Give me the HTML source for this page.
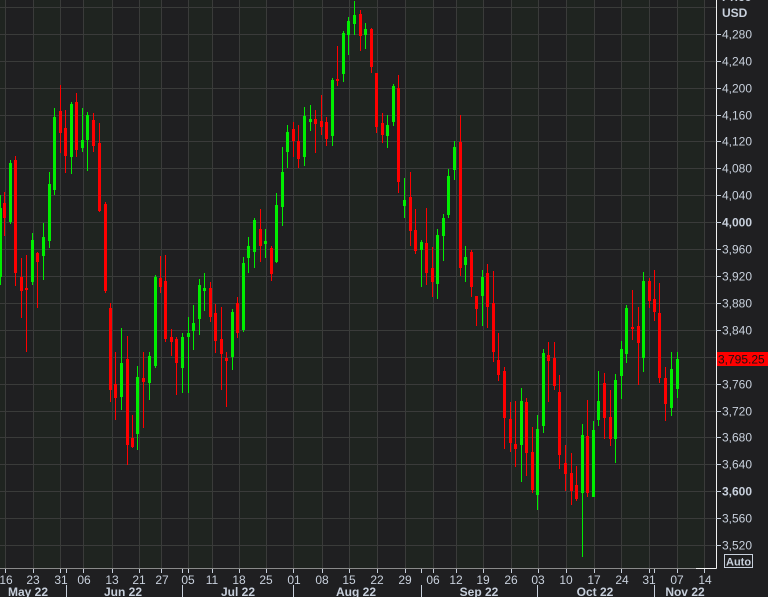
<!DOCTYPE html>
<html><head><meta charset="utf-8"><style>
html,body{margin:0;padding:0;background:#1f1f21;}
svg{display:block;font-family:"Liberation Sans","DejaVu Sans",sans-serif;}
</style></head><body>
<svg width="768" height="597" viewBox="0 0 768 597" xmlns="http://www.w3.org/2000/svg">
<rect width="768" height="597" fill="#1f1f21"/>
<g fill="#1f2420">
<rect x="0" y="0" width="5" height="568"/>
<rect x="33" y="0" width="27" height="568"/>
<rect x="83" y="0" width="29" height="568"/>
<rect x="139" y="0" width="22" height="568"/>
<rect x="188" y="0" width="24" height="568"/>
<rect x="239" y="0" width="27" height="568"/>
<rect x="293" y="0" width="29" height="568"/>
<rect x="349" y="0" width="28" height="568"/>
<rect x="405" y="0" width="28" height="568"/>
<rect x="456" y="0" width="27" height="568"/>
<rect x="511" y="0" width="27" height="568"/>
<rect x="566" y="0" width="28" height="568"/>
<rect x="621" y="0" width="28" height="568"/>
<rect x="677" y="0" width="27" height="568"/>
</g>
<path stroke="#3a3b3a" stroke-width="1" fill="none" d="M0 7.5H716M0 34.5H716M0 61.5H716M0 88.5H716M0 115.5H716M0 141.5H716M0 168.5H716M0 195.5H716M0 222.5H716M0 249.5H716M0 276.5H716M0 303.5H716M0 330.5H716M0 357.5H716M0 384.5H716M0 411.5H716M0 437.5H716M0 464.5H716M0 491.5H716M0 518.5H716M0 545.5H716
M5.5 0V568M33.5 0V568M60.5 0V568M83.5 0V568M112.5 0V568M139.5 0V568M161.5 0V568M188.5 0V568M212.5 0V568M239.5 0V568M266.5 0V568M293.5 0V568M322.5 0V568M349.5 0V568M377.5 0V568M405.5 0V568M433.5 0V568M456.5 0V568M483.5 0V568M511.5 0V568M538.5 0V568M566.5 0V568M594.5 0V568M621.5 0V568M649.5 0V568M677.5 0V568M704.5 0V568"/>
<path stroke="#00ee00" stroke-width="1" fill="none" d="M0.5 195V285M10.5 160V224M32.5 233V285M43.5 223V280M49.5 172V248M54.5 108V195M71.5 102V174M82.5 108V152M87.5 112V171M121.5 328V410M137.5 366V450M149.5 352V400M155.5 275V368M182.5 333V393M188.5 317V393M193.5 305V350M199.5 279V335M204.5 273V311M232.5 309V370M243.5 257V332M248.5 237V273M254.5 218V268M265.5 229V258M276.5 193V263M282.5 147V226M287.5 125V168M304.5 107V166M310.5 105V131M332.5 78V146M343.5 31V82M348.5 17V55M354.5 1V35M365.5 23V49M387.5 115V148M393.5 84V126M404.5 178V218M421.5 240V287M437.5 229V299M443.5 214V261M448.5 169V218M454.5 141V180M465.5 246V282M482.5 270V326M521.5 388V482M537.5 415V510M543.5 349V433M582.5 424V557M593.5 421V497M598.5 371V426M615.5 374V463M621.5 341V399M626.5 305V363M643.5 272V372M671.5 352V416M677.5 352V398"/>
<path stroke="#00ee00" stroke-width="3" fill="none" d="M0.5 208V277M10.5 163V222M32.5 240V282M43.5 237V256M49.5 184V241M54.5 117V190M71.5 104V157M82.5 140V148M87.5 115V140M121.5 363V397M137.5 377V434M149.5 356V383M155.5 277V366M182.5 337V368M188.5 333V337M193.5 323V331M199.5 285V319M204.5 288V291M232.5 312V357M243.5 263V330M248.5 246V258M254.5 220V252M265.5 241V244M276.5 205V262M282.5 172V207M287.5 132V152M304.5 116V157M310.5 119V122M332.5 80V136M343.5 33V74M348.5 21V35M354.5 15V24M365.5 29V35M387.5 125V136M393.5 86V122M404.5 200V206M421.5 242V250M437.5 235V284M443.5 218V236M448.5 176V215M454.5 147V170M465.5 257V265M482.5 277V296M521.5 401V445M537.5 429V495M543.5 353V426M582.5 435V493M593.5 430V497M598.5 401V420M615.5 380V439M621.5 349V376M626.5 308V354M643.5 281V358M671.5 369V408M677.5 359V389"/>
<path stroke="#ff0000" stroke-width="1" fill="none" d="M4.5 192V236M15.5 156V286M21.5 258V318M26.5 255V352M37.5 252V308M60.5 85V153M65.5 110V173M76.5 93V157M93.5 113V152M99.5 123V212M105.5 202V293M110.5 303V402M115.5 352V420M127.5 336V465M132.5 415V448M143.5 352V428M160.5 256V293M165.5 255V342M171.5 329V356M176.5 337V395M210.5 282V322M215.5 304V353M221.5 307V390M226.5 352V407M237.5 297V338M260.5 209V262M271.5 246V281M293.5 122V157M298.5 125V168M315.5 110V153M321.5 95V135M326.5 117V146M337.5 46V86M360.5 10V51M371.5 28V73M376.5 73V133M382.5 113V143M398.5 75V193M410.5 172V246M415.5 209V254M426.5 208V285M432.5 247V297M460.5 115V276M471.5 250V297M476.5 296V326M487.5 264V328M493.5 271V362M498.5 333V381M504.5 367V449M510.5 402V452M515.5 401V467M526.5 398V476M532.5 427V493M548.5 342V402M554.5 342V390M559.5 375V469M565.5 445V491M571.5 453V505M576.5 466V501M587.5 400V497M604.5 373V439M610.5 390V446M632.5 290V340M638.5 307V385M649.5 278V308M654.5 270V321M659.5 283V383M665.5 367V421"/>
<path stroke="#ff0000" stroke-width="3" fill="none" d="M4.5 203V218M15.5 160V273M21.5 277V291M26.5 288V290M37.5 253V262M60.5 111V133M65.5 128V156M76.5 102V150M93.5 120V146M99.5 143V211M105.5 204V291M110.5 308V390M115.5 384V398M127.5 359V445M132.5 438V447M143.5 378V382M160.5 278V287M165.5 281V339M171.5 337V342M176.5 339V363M210.5 288V317M215.5 313V341M221.5 339V354M226.5 358V361M237.5 303V333M260.5 229V246M271.5 248V274M293.5 129V141M298.5 141V159M315.5 119V124M321.5 121V127M326.5 122V139M337.5 79V81M360.5 14V36M371.5 29V67M376.5 73V127M382.5 123V135M398.5 88V182M410.5 197V231M415.5 230V251M426.5 243V273M432.5 268V282M460.5 142V268M471.5 252V287M476.5 296V309M487.5 273V307M493.5 303V352M498.5 360V375M504.5 371V418M510.5 419V443M515.5 444V449M526.5 402V453M532.5 452V490M548.5 355V361M554.5 358V386M559.5 392V455M565.5 463V474M571.5 473V491M576.5 485V499M587.5 436V493M604.5 383V418M610.5 417V439M632.5 327V329M638.5 326V343M649.5 281V301M654.5 299V312M659.5 313V378M665.5 378V404"/>
<path stroke="#f0f0f0" stroke-width="1" fill="none" d="M716.5 0V568.5M696 568.5H716.5"/>
<path stroke="#8a8a8a" stroke-width="1" fill="none" d="M0 568.5H696"/>
<path stroke="#c8d0dc" stroke-width="1" fill="none" d="M716 34.5H721M716 61.5H721M716 88.5H721M716 115.5H721M716 141.5H721M716 168.5H721M716 195.5H721M716 222.5H721M716 249.5H721M716 276.5H721M716 303.5H721M716 330.5H721M716 384.5H721M716 411.5H721M716 437.5H721M716 464.5H721M716 491.5H721M716 518.5H721M716 545.5H721
M5.5 569V573M33.5 569V573M60.5 569V573M66.5 569V573M83.5 569V573M112.5 569V573M139.5 569V573M161.5 569V573M182.5 569V573M188.5 569V573M212.5 569V573M239.5 569V573M266.5 569V573M293.5 569V573M322.5 569V573M349.5 569V573M377.5 569V573M405.5 569V573M421.5 569V573M433.5 569V573M456.5 569V573M483.5 569V573M511.5 569V573M538.5 569V573M566.5 569V573M594.5 569V573M621.5 569V573M649.5 569V573M654.5 569V573M677.5 569V573M704.5 569V573
M66.5 585V597M182.5 585V597M293.5 585V597M421.5 585V597M537.5 585V597M654.5 585V597"/>
<g fill="#c8d0dc" font-size="12">
<text x="722" y="1" font-weight="bold">Price</text>
<text x="722" y="17" font-weight="bold">USD</text>
<text x="722" y="38.5">4,280</text>
<text x="722" y="65.5">4,240</text>
<text x="722" y="92.5">4,200</text>
<text x="722" y="119.5">4,160</text>
<text x="722" y="145.5">4,120</text>
<text x="722" y="172.5">4,080</text>
<text x="722" y="199.5">4,040</text>
<text x="722" y="226.5" font-weight="bold">4,000</text>
<text x="722" y="253.5">3,960</text>
<text x="722" y="280.5">3,920</text>
<text x="722" y="307.5">3,880</text>
<text x="722" y="334.5">3,840</text>
<text x="722" y="388.5">3,760</text>
<text x="722" y="415.5">3,720</text>
<text x="722" y="441.5">3,680</text>
<text x="722" y="468.5">3,640</text>
<text x="722" y="495.5" font-weight="bold">3,600</text>
<text x="722" y="522.5">3,560</text>
<text x="722" y="549.5">3,520</text>
</g>
<rect x="717" y="352" width="51" height="14" fill="#ff0000"/>
<text x="718" y="363.5" font-size="12" fill="#1a1212">3,795.25</text>
<rect x="724.5" y="554.5" width="28" height="13" fill="none" stroke="#c8d0dc"/>
<text x="726" y="565.5" font-size="11" font-weight="bold" fill="#c8d0dc">Auto</text>
<g fill="#c8d0dc" font-size="12" text-anchor="middle">
<text x="6" y="584">16</text><text x="33" y="584">23</text><text x="61" y="584">31</text><text x="84" y="584">06</text>
<text x="112" y="584">13</text><text x="139" y="584">21</text><text x="162" y="584">27</text><text x="188" y="584">05</text>
<text x="212" y="584">11</text><text x="239" y="584">18</text><text x="266" y="584">25</text><text x="294" y="584">01</text>
<text x="322" y="584">08</text><text x="349" y="584">15</text><text x="377" y="584">22</text><text x="405" y="584">29</text>
<text x="433" y="584">06</text><text x="456" y="584">12</text><text x="483" y="584">19</text><text x="511" y="584">26</text>
<text x="538" y="584">03</text><text x="566" y="584">10</text><text x="594" y="584">17</text><text x="622" y="584">24</text>
<text x="649" y="584">31</text><text x="677" y="584">07</text><text x="705" y="584">14</text>
</g>
<g fill="#c8d0dc" font-size="12" font-weight="bold" text-anchor="middle">
<text x="28" y="596">May 22</text><text x="123" y="596">Jun 22</text><text x="238" y="596">Jul 22</text>
<text x="356" y="596">Aug 22</text><text x="479" y="596">Sep 22</text><text x="595" y="596">Oct 22</text><text x="685" y="596">Nov 22</text>
</g>
</svg>
</body></html>
